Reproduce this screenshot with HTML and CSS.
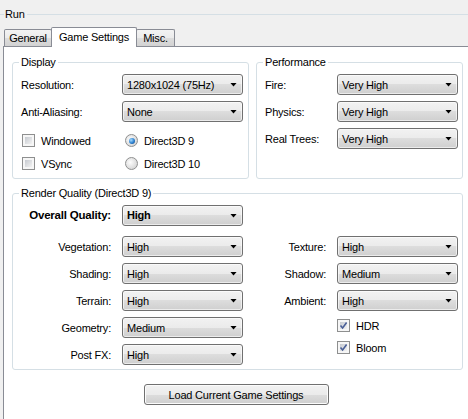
FILE: index.html
```html
<!DOCTYPE html>
<html lang="en">
<head>
  <meta charset="UTF-8">
  <title>Run - Game Settings</title>
  <link rel="stylesheet" href="styles.css">
</head>
<body>
<div class="run-box">
  <div class="run-title"><span>Run</span></div>

  <!-- tab strip -->
  <div class="tab-strip">
    <div class="tab tab-general">General</div>
    <div class="tab tab-active">Game Settings</div>
    <div class="tab tab-misc">Misc.</div>
  </div>

  <div class="tab-page">
    <div class="top-row">
      <fieldset class="group group-display">
        <legend>Display</legend>
        <div class="form-grid display-grid">
          <label>Resolution:</label>
          <div class="combo"><span>1280x1024 (75Hz)</span></div>
          <label>Anti-Aliasing:</label>
          <div class="combo"><span>None</span></div>
        </div>
        <div class="option-grid">
          <div class="option"><span class="check"></span>Windowed</div>
          <div class="option"><span class="radio checked"></span>Direct3D 9</div>
          <div class="option"><span class="check"></span>VSync</div>
          <div class="option"><span class="radio"></span>Direct3D 10</div>
        </div>
      </fieldset>

      <fieldset class="group group-perf">
        <legend>Performance</legend>
        <div class="form-grid perf-grid">
          <label>Fire:</label>
          <div class="combo"><span>Very High</span></div>
          <label>Physics:</label>
          <div class="combo"><span>Very High</span></div>
          <label>Real Trees:</label>
          <div class="combo"><span>Very High</span></div>
        </div>
      </fieldset>
    </div>

    <fieldset class="group group-render">
      <legend>Render Quality (Direct3D 9)</legend>
      <div class="render-grid">
        <label class="col-1 overall">Overall Quality:</label>
        <div class="col-2 combo overall"><span>High</span></div>

        <label class="col-1">Vegetation:</label>
        <div class="col-2 combo"><span>High</span></div>
        <label class="col-3">Texture:</label>
        <div class="col-4 combo"><span>High</span></div>

        <label class="col-1">Shading:</label>
        <div class="col-2 combo"><span>High</span></div>
        <label class="col-3">Shadow:</label>
        <div class="col-4 combo"><span>Medium</span></div>

        <label class="col-1">Terrain:</label>
        <div class="col-2 combo"><span>High</span></div>
        <label class="col-3">Ambient:</label>
        <div class="col-4 combo"><span>High</span></div>

        <label class="col-1">Geometry:</label>
        <div class="col-2 combo"><span>Medium</span></div>
        <div class="col-4 check-list">
          <div class="option">
            <span class="check checked"><svg width="7" height="7" viewBox="0 0 7 7"><path d="M0.5 3.5 L2.6 6 L6.6 0.6" fill="none" stroke="#4a5f97" stroke-width="1.6"/></svg></span>HDR
          </div>
          <div class="option">
            <span class="check checked"><svg width="7" height="7" viewBox="0 0 7 7"><path d="M0.5 3.5 L2.6 6 L6.6 0.6" fill="none" stroke="#4a5f97" stroke-width="1.6"/></svg></span>Bloom
          </div>
        </div>

        <label class="col-1">Post FX:</label>
        <div class="col-2 combo"><span>High</span></div>
      </div>
    </fieldset>

    <div class="actions">
      <button type="button" class="load-button">Load Current Game Settings</button>
    </div>
  </div>
</div>
</body>
</html>
```

FILE: styles.css
```css
body {
  margin: 0;
  height: 100vh;
  overflow: hidden;
  background-color: #f0f0f0;
  font-family: "Liberation Sans", Arial, sans-serif;
  font-size: 11px;
  letter-spacing: -0.2px;
  color: #000;
}

.run-box {
  display: flex;
  flex-direction: column;
  height: 100%;
  padding-left: 3px;
  box-sizing: border-box;
}

/* "Run" group title with its line */
.run-title {
  display: flex;
  align-items: center;
  height: 27px;
  margin-left: -3px;
}

.run-title::before,
.run-title::after {
  content: "";
  border-top: 1px solid #d5dfe5;
  margin-top: 2px;
}

.run-title::before {
  width: 4px;
}

.run-title::after {
  flex: 1;
}

.run-title span {
  padding: 0 2px 0 1px;
}

/* tabs */
.tab-strip {
  display: flex;
  align-items: flex-end;
  padding-left: 1px;
  margin-bottom: -1px;
}

.tab {
  display: flex;
  align-items: center;
  justify-content: center;
  height: 17px;
  margin-bottom: 1px;
  box-sizing: border-box;
  border: 1px solid #898c95;
  border-bottom: none;
  border-radius: 2px 2px 0 0;
  background: linear-gradient(#f3f3f3, #ebebeb 50%, #dddddd 50%, #d2d2d2);
}

.tab + .tab {
  margin-left: -1px;
}

.tab-general {
  width: 48px;
}

.tab-misc {
  width: 39px;
}

.tab-active {
  position: relative;
  z-index: 1;
  width: 86px;
  height: 20px;
  margin-bottom: 0;
  padding-bottom: 2px;
  background: #fff;
}

.tab-page {
  flex: 1;
  background-color: #fff;
  border-top: 1px solid #898c95;
  border-left: 1px solid #898c95;
  padding: 9px 5px 0 8px;
}

/* group boxes */
.top-row {
  display: flex;
  gap: 7px;
}

.group {
  margin: 0;
  padding: 5px 0 8px 0;
  border: 1px solid #d5dfe5;
  border-radius: 3px;
  min-width: 0;
}

.group legend {
  margin-left: 6px;
  padding: 0 2px;
  line-height: 13px;
}

.group-display {
  width: 237px;
  box-sizing: border-box;
}

.group-perf {
  flex: 1;
}

.group-render {
  margin-top: 8px;
  padding-bottom: 4px;
}

.form-grid {
  display: grid;
  grid-auto-rows: 21px;
  row-gap: 6px;
  align-items: center;
  padding-left: 8px;
}

.display-grid {
  grid-template-columns: 101px 121px;
}

.perf-grid {
  grid-template-columns: 72px 121px;
}

.option-grid {
  display: grid;
  grid-template-columns: 103px auto;
  grid-auto-rows: 13px;
  row-gap: 10px;
  margin-top: 12px;
  padding-left: 9px;
}

.option {
  display: flex;
  align-items: center;
  gap: 6px;
  height: 13px;
}

.render-grid {
  display: grid;
  grid-template-columns: 98px 121px 72px 121px;
  grid-template-rows: 25px repeat(5, 21px);
  column-gap: 11px;
  row-gap: 6px;
  align-items: center;
}

.render-grid label {
  justify-self: end;
}

.col-1 { grid-column: 1; }
.col-2 { grid-column: 2; }
.col-3 { grid-column: 3; }
.col-4 { grid-column: 4; }

.overall {
  align-self: start;
  font-weight: bold;
  line-height: 21px;
}

.render-grid label.overall {
  font-size: 11.5px;
}

.check-list {
  grid-row: span 2;
  align-self: stretch;
  display: flex;
  flex-direction: column;
  gap: 9px;
  padding-top: 2px;
}

/* combo boxes */
.combo {
  display: flex;
  align-items: center;
  justify-content: space-between;
  height: 21px;
  box-sizing: border-box;
  padding: 0 5px 0 4px;
  border: 1px solid #707070;
  border-radius: 3px;
  background: linear-gradient(#f2f2f2, #ebebeb 50%, #dddddd 50%, #cfcfcf);
  box-shadow: inset 0 0 0 1px rgba(255, 255, 255, 0.6);
}

.combo::after {
  content: "";
  width: 7px;
  height: 4px;
  background: #000;
  clip-path: polygon(0 0, 100% 0, 50% 100%);
}

/* check boxes and radio buttons */
.check {
  display: flex;
  align-items: center;
  justify-content: center;
  flex: none;
  width: 13px;
  height: 13px;
  box-sizing: border-box;
  border: 1px solid #8e8f8f;
  padding: 2px;
  background: linear-gradient(135deg, #c6cad0, #f2f2f2) content-box, #f6f6f6;
}

.check svg {
  overflow: visible;
}

.radio {
  display: flex;
  align-items: center;
  justify-content: center;
  flex: none;
  width: 13px;
  height: 13px;
  box-sizing: border-box;
  border: 1px solid #8e8f8f;
  border-radius: 50%;
  background: radial-gradient(circle at 40% 40%, #fdfdfd, #d2d2d2 85%);
}

.radio.checked::after {
  content: "";
  width: 6px;
  height: 6px;
  border-radius: 50%;
  background: radial-gradient(circle at 35% 35%, #a6dcff, #2a7fd0 55%, #103f75);
}

/* bottom button */
.actions {
  display: flex;
  justify-content: center;
  margin-top: 14px;
  padding-right: 3px;
}

.load-button {
  width: 185px;
  height: 21px;
  padding: 0;
  border: 1px solid #707070;
  border-radius: 3px;
  background: linear-gradient(#f2f2f2, #ebebeb 50%, #dddddd 50%, #cfcfcf);
  box-shadow: inset 0 0 0 1px #fcfcfc;
  font: inherit;
  letter-spacing: inherit;
  color: #000;
}
```
